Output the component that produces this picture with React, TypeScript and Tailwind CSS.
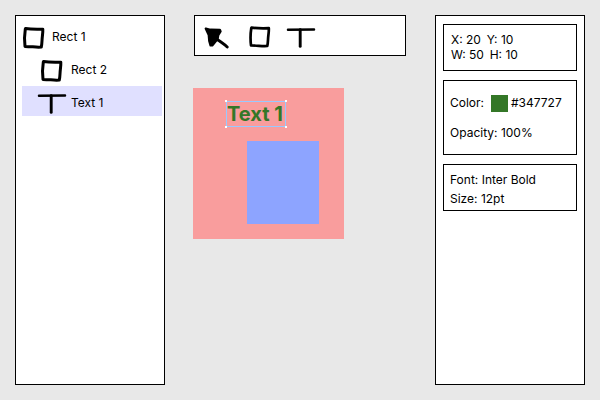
import type { ReactNode } from "react";

function RectIcon({ weight = 3 }: { weight?: number }) {
  return (
    <svg width="24" height="24" viewBox="0 0 24 24" fill="none" stroke="black" strokeWidth={weight} strokeLinecap="round" strokeLinejoin="round" className="block shrink-0">
      <path d="M3.6 2.6C8 3.3 14 3.4 20.8 3.2C21 6 20.7 8 20.3 11C19.9 14 20.1 18 19.3 21C15 21.6 10 20.5 3 20.4C2.3 14.5 2.5 8 3.3 3" />
    </svg>
  );
}

function TextIcon() {
  return (
    <svg width="30" height="22" viewBox="0 0 30 22" fill="none" stroke="black" strokeLinecap="round" className="block shrink-0">
      <path d="M2 2.7C10 2.5 20 2.5 28 2.5" strokeWidth="2.5" />
      <path d="M14.2 2.7V19.4" strokeWidth="2.9" />
    </svg>
  );
}

function CursorIcon() {
  return (
    <svg width="28" height="24" viewBox="0 0 28 24" fill="black" stroke="black" strokeLinecap="round" strokeLinejoin="round" className="block shrink-0">
      <path d="M2.8 3.6L7.4 4.8L16.9 5L17.5 6.4L15.2 10L14.5 14L9.2 20.4L7.6 20.4L6.3 16L5.8 10Z" strokeWidth="2.4" />
      <path d="M13.5 14C17.2 16.4 20.7 18.7 24.2 22" strokeWidth="2.9" fill="none" />
    </svg>
  );
}

function Card({ className, children }: { className: string; children: ReactNode }) {
  return <section className={`border border-black ${className}`}>{children}</section>;
}

export default function App() {
  return (
    <div className="flex h-[400px] w-[600px] items-start overflow-hidden bg-[#e8e8e8] py-[15px] pl-[15px] font-['Inter',sans-serif] text-[12px] leading-[15px] text-black">
      <aside className="h-[370px] w-[150px] border border-black bg-white pt-[10px] pl-1.5">
        <div className="flex h-6 items-start">
          <RectIcon />
          <span className="ml-[6px] pt-[3px]">Rect 1</span>
        </div>
        <div className="mt-[9px] flex h-6 items-start pl-[18px]">
          <RectIcon />
          <span className="ml-[7px] pt-[3px]">Rect 2</span>
        </div>
        <div className="mt-[3px] flex h-[30px] w-[140px] items-start bg-[#e0e0ff] pt-[7px] pl-[15px]">
          <TextIcon />
          <span className="ml-1 pt-[2px]">Text 1</span>
        </div>
      </aside>

      <main className="ml-[28px] w-[213px]">
        <nav className="ml-px flex h-[41px] w-[212px] items-start border border-black bg-white pt-[9px] pl-[8px]">
          <CursorIcon />
          <div className="ml-[17px]"><RectIcon weight={2.7} /></div>
          <div className="ml-[14px] pt-[2px]"><TextIcon /></div>
        </nav>
        <div className="relative mt-8 h-[151px] w-[151px] bg-[#f99d9d]">
          <div className="absolute top-[53px] left-[54px] h-[83px] w-[72px] bg-[#8da4ff]" />
          <div className="absolute top-[13px] left-[33px] h-[26px] w-[60px] border border-[#99c9ff]">
            <span className="block text-[20px] leading-[25px] font-bold whitespace-nowrap text-[#347727]">Text 1</span>
            <i className="absolute -top-[2px] -left-[2px] size-[2px] bg-white" />
            <i className="absolute -top-[2px] -right-[2px] size-[2px] bg-white" />
            <i className="absolute -bottom-[2px] -left-[2px] size-[2px] bg-white" />
            <i className="absolute -right-[2px] -bottom-[2px] size-[2px] bg-white" />
          </div>
        </div>
      </main>

      <aside className="ml-[29px] flex h-[370px] w-[150px] flex-col gap-[9px] border border-black bg-white px-[7px] pt-2">
        <Card className="h-[47px] pt-[7px] pl-[7px] whitespace-pre">
          <p>X: 20  <span className="-ml-px">Y: 10</span></p>
          <p>W: 50  <span className="-ml-px">H: 10</span></p>
        </Card>
        <Card className="h-[75px] pt-[14px] pl-[6px]">
          <div className="flex h-[17px] items-start">
            <span className="w-[41px]">Color:</span>
            <span className="size-[17px] bg-[#347727]" />
            <span className="ml-[3px]">#347727</span>
          </div>
          <p className="mt-[13px]">Opacity: 100%</p>
        </Card>
        <Card className="h-[47px] pt-[7px] pl-[6px]">
          <p>Font: Inter Bold</p>
          <p className="mt-1">Size: 12pt</p>
        </Card>
      </aside>
    </div>
  );
}
